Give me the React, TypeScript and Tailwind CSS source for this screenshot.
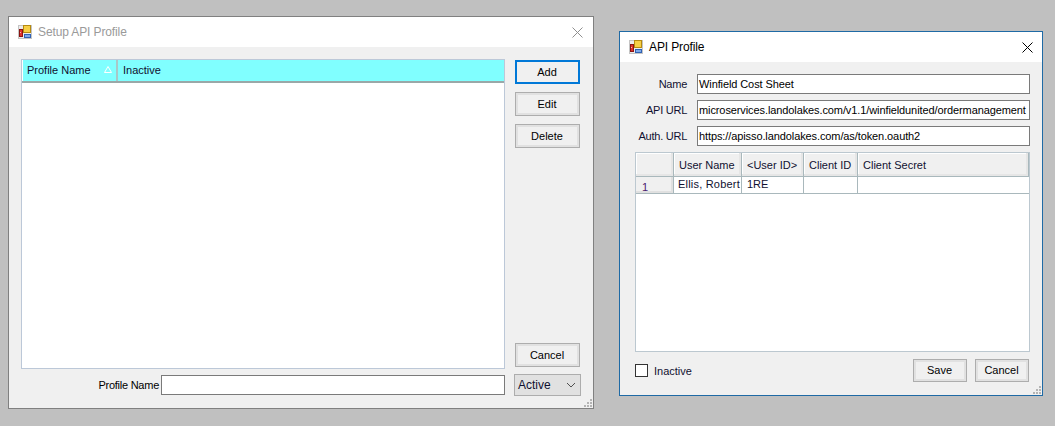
import React from "react";

const font = { fontFamily: '"Liberation Sans", Arial, sans-serif' };

function AppIcon() {
  return (
    <svg width="14" height="14" viewBox="0 0 14 14" className="shrink-0" shapeRendering="crispEdges">
      <rect x="0" y="0" width="14" height="14" fill="#c4c4c4" />
      <rect x="1" y="1" width="12" height="12" fill="#ececec" />
      <rect x="5" y="0" width="8" height="8" fill="#b58a10" />
      <rect x="6" y="1" width="6" height="6" fill="#f7cf45" />
      <rect x="1" y="4" width="4" height="8" fill="#8a1512" />
      <rect x="2" y="5" width="2" height="6" fill="#e0302a" />
      <rect x="2" y="7" width="1" height="1" fill="#f4c0b0" />
      <rect x="6" y="9" width="7" height="4" fill="#2f62b4" />
      <rect x="7" y="10" width="5" height="2" fill="#7fa8e8" />
    </svg>
  );
}

function CloseIcon({ color }: { color: string }) {
  return (
    <svg width="11" height="11" viewBox="0 0 11 11" className="shrink-0">
      <path d="M0.5 0.5 L10.5 10.5 M10.5 0.5 L0.5 10.5" stroke={color} strokeWidth="1" fill="none" />
    </svg>
  );
}

function Grip() {
  return (
    <svg width="8" height="8" viewBox="0 0 8 8" className="absolute right-[1px] bottom-[1px]">
      <g fill="#b4b4b4">
        <rect x="6" y="0" width="2" height="2" />
        <rect x="3" y="3" width="2" height="2" />
        <rect x="6" y="3" width="2" height="2" />
        <rect x="0" y="6" width="2" height="2" />
        <rect x="3" y="6" width="2" height="2" />
        <rect x="6" y="6" width="2" height="2" />
      </g>
    </svg>
  );
}

function Btn({ label, className, primary }: { label: string; className: string; primary?: boolean }) {
  return (
    <button
      className={
        primary
          ? `h-[24px] border-2 border-[#0078d7] bg-[#f0f0f0] pr-[1px] text-[11px] text-black ${className}`
          : `h-[24px] border border-[#adadad] bg-[#f0f0f0] pr-[1px] shadow-[inset_0_0_0_2px_#e1e1e1] text-[11px] text-black ${className}`
      }
    >
      {label}
    </button>
  );
}

function TextBox({ value, className }: { value: string; className: string }) {
  return (
    <div className={`h-[20px] border border-[#7a7a7a] bg-white pl-[1px] leading-[18px] tracking-[-0.1px] text-[11px] text-black overflow-hidden whitespace-nowrap ${className}`}>
      {value}
    </div>
  );
}

function HeaderCell({ label, className }: { label: string; className: string }) {
  return (
    <div className={`h-full shrink-0 border-r border-b border-[#a9b8bc] bg-[#f0f0f0] shadow-[inset_-2px_-2px_0_#e6e6e6,inset_1px_1px_0_#ffffff] flex items-center pl-[5px] pt-[2px] whitespace-nowrap text-[11px] text-[#101030] ${className}`}>
      {label}
    </div>
  );
}

function SetupWindow() {
  return (
    <div className="relative w-[586px] h-[393px] border border-[#808080] bg-[#f0f0f0] shrink-0 flex flex-col">
      <div className="h-[30px] bg-white flex items-center pl-[9px] pr-[10px] gap-[6px]">
        <AppIcon />
        <span className="text-[12px] tracking-[-0.12px] text-[#9a9a9a] flex-1">Setup API Profile</span>
        <CloseIcon color="#8f8f8f" />
      </div>
      <div className="flex-1 flex flex-col pl-[12px] pr-[12px] pt-[12px]">
        <div className="flex gap-[10px]">
          <div className="w-[484px] h-[310px] border border-[#bcc8d8] bg-white">
            <div className="h-[23px] flex bg-[#80ffff] border-b-2 border-[#9aa8a8] text-[11px] text-[#101030]">
              <div className="relative w-[96px] flex items-center pl-[4px] border-l border-white border-r-2 border-r-[#a8c8c8]">
                Profile Name
                <svg width="8" height="7" viewBox="0 0 8 7" className="absolute right-[4px] top-[6px]">
                  <path d="M4 0.5 L7.5 6.5 L0.5 6.5 Z" fill="#80ffff" stroke="#ffffff" strokeWidth="1" />
                </svg>
              </div>
              <div className="flex-1 flex items-center pl-[5px]">Inactive</div>
            </div>
          </div>
          <div className="w-[65px] flex flex-col gap-[8px] pt-[1px]">
            <Btn label="Add" className="w-[65px]" primary />
            <Btn label="Edit" className="w-[65px]" />
            <Btn label="Delete" className="w-[65px]" />
            <Btn label="Cancel" className="w-[65px] mt-[187px]" />
          </div>
        </div>
        <div className="flex items-center mt-[5px] h-[22px]">
          <span className="w-[139px] text-right text-[11px] tracking-[-0.25px] text-black pr-[1px]">Profile Name</span>
          <TextBox value="" className="w-[344px] ml-[1px]" />
          <div className="ml-[9px] w-[67px] h-[22px] border border-[#adadad] bg-[#e1e1e1] flex items-center justify-between pl-[3px] pr-[4px] text-[12px] text-[#101030]">
            <span>Active</span>
            <svg width="10" height="6" viewBox="0 0 10 6">
              <path d="M1 1 L5 5 L9 1" stroke="#505050" strokeWidth="1" fill="none" />
            </svg>
          </div>
        </div>
      </div>
      <Grip />
    </div>
  );
}

function ProfileWindow() {
  return (
    <div className="relative w-[424px] h-[365px] border border-[#1f6aa5] bg-[#f0f0f0] shrink-0 flex flex-col">
      <div className="h-[30px] bg-white flex items-center pl-[9px] pr-[9px] gap-[6px]">
        <AppIcon />
        <span className="text-[12px] tracking-[-0.12px] text-black flex-1">API Profile</span>
        <CloseIcon color="#000000" />
      </div>
      <div className="flex-1 flex flex-col pl-[15px] pr-[12px] pt-[12px]">
        <div className="flex flex-col gap-[6px]">
          <div className="flex items-center gap-[10px]">
            <span className="w-[52px] text-right text-[11px] tracking-[-0.25px] text-[#101030]">Name</span>
            <TextBox value="Winfield Cost Sheet" className="w-[333px]" />
          </div>
          <div className="flex items-center gap-[10px]">
            <span className="w-[52px] text-right text-[11px] tracking-[-0.25px] text-[#101030]">API URL</span>
            <TextBox value="microservices.landolakes.com/v1.1/winfieldunited/ordermanagement" className="w-[333px]" />
          </div>
          <div className="flex items-center gap-[10px]">
            <span className="w-[52px] text-right text-[11px] tracking-[-0.25px] text-[#101030]">Auth. URL</span>
            <TextBox value="https://apisso.landolakes.com/as/token.oauth2" className="w-[333px]" />
          </div>
        </div>
        <div className="mt-[6px] w-[395px] h-[200px] border border-[#bcc8d0] bg-white overflow-hidden">
          <div className="h-[24px] flex">
            <HeaderCell label="" className="w-[38px]" />
            <HeaderCell label="User Name" className="w-[68px]" />
            <HeaderCell label="<User ID>" className="w-[62px]" />
            <HeaderCell label="Client ID" className="w-[54px]" />
            <HeaderCell label="Client Secret" className="flex-1" />
          </div>
          <div className="h-[17px] flex border-b border-[#a9b8bc] text-[11px] text-[#101030]">
            <div className="w-[38px] bg-[#f0f0f0] border-r border-[#a9b8bc] shadow-[inset_-2px_-2px_0_#e0e0e0] pl-[6px] pt-[3px] text-[#4b1a6e] leading-[15px]">1</div>
            <div className="w-[68px] border-r border-[#a9b8bc] pl-[4px] leading-[14px] tracking-[0.2px] overflow-hidden whitespace-nowrap">Ellis, Robert</div>
            <div className="w-[62px] border-r border-[#a9b8bc] pl-[5px] leading-[14px]">1RE</div>
            <div className="w-[54px] border-r border-[#a9b8bc]"></div>
            <div className="flex-1"></div>
          </div>
        </div>
        <div className="flex items-center mt-[7px] pr-[1px]">
          <div className="w-[13px] h-[13px] border border-[#333333] bg-white"></div>
          <span className="ml-[6px] pt-[1px] text-[11px] text-[#101030] flex-1">Inactive</span>
          <Btn label="Save" className="w-[54px] !h-[23px]" />
          <Btn label="Cancel" className="w-[54px] !h-[23px] ml-[8px]" />
        </div>
      </div>
      <Grip />
    </div>
  );
}

export default function App() {
  return (
    <div className="w-[1055px] h-[426px] bg-[#c0c0c0] overflow-hidden flex items-start pl-[8px] pt-[16px] gap-[25px]" style={font}>
      <SetupWindow />
      <div className="pt-[15px]">
        <ProfileWindow />
      </div>
    </div>
  );
}
